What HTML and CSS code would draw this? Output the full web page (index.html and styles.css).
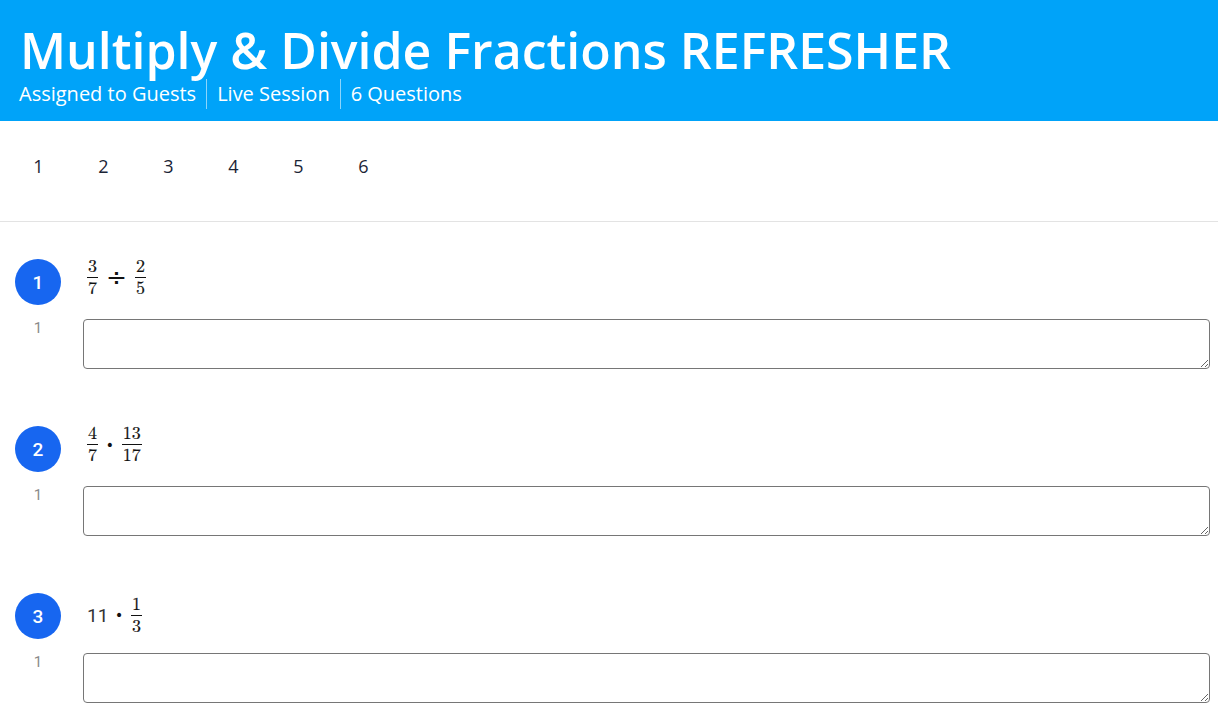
FILE: index.html
```html
<!DOCTYPE html>
<html lang="en">
<head>
<meta charset="utf-8">
<title>Multiply &amp; Divide Fractions REFRESHER</title>
<link rel="stylesheet" href="styles.css">
</head>
<body>
<header class="banner">
  <h1 class="title">Multiply &amp; Divide Fractions REFRESHER</h1>
  <div class="meta">
    <span class="meta-item">Assigned to Guests</span>
    <span class="meta-item">Live Session</span>
    <span class="meta-item">6 Questions</span>
  </div>
</header>
<nav class="qnav">
  <a class="qnav-item">1</a>
  <a class="qnav-item">2</a>
  <a class="qnav-item">3</a>
  <a class="qnav-item">4</a>
  <a class="qnav-item">5</a>
  <a class="qnav-item">6</a>
</nav>
<main class="questions">
  <section class="question">
    <div class="badge">1</div>
    <div class="prompt">
      <span class="frac"><span class="num">3</span><span class="den">7</span></span>
      <span class="op op-div">÷</span>
      <span class="frac"><span class="num">2</span><span class="den">5</span></span>
    </div>
    <div class="points">1</div>
    <textarea class="answer"></textarea>
  </section>
  <section class="question">
    <div class="badge">2</div>
    <div class="prompt">
      <span class="frac"><span class="num">4</span><span class="den">7</span></span>
      <span class="op">·</span>
      <span class="frac"><span class="num">13</span><span class="den">17</span></span>
    </div>
    <div class="points">1</div>
    <textarea class="answer"></textarea>
  </section>
  <section class="question">
    <div class="badge">3</div>
    <div class="prompt prompt-text">
      <span class="plain">11</span>
      <span class="op op-tight">·</span>
      <span class="frac"><span class="num">1</span><span class="den">3</span></span>
    </div>
    <div class="points">1</div>
    <textarea class="answer"></textarea>
  </section>
</main>
</body>
</html>
```
FILE: styles.css
```css
* { box-sizing: border-box; }
html, body { margin: 0; padding: 0; background: #fff; }
body {
  font-family: "Open Sans", "Noto Sans", sans-serif;
  color: #1b2436;
  overflow: hidden;
}
.banner {
  background: #00a3f9;
  color: #fff;
  height: 121px;
  padding: 22px 20px 0 20px;
}
.title {
  margin: 0;
  font-size: 50px;
  font-weight: 600;
  line-height: 56px;
  letter-spacing: 0;
}
.meta {
  display: flex;
  align-items: center;
  margin-top: 1px;
  margin-left: -1px;
}
.meta-item {
  font-size: 20px;
  line-height: 30px;
  padding: 0 10px;
  border-left: 1px solid rgba(255,255,255,0.55);
}
.meta-item:first-child { padding-left: 0; border-left: none; }
.qnav {
  display: flex;
  height: 101px;
  align-items: center;
  border-bottom: 1px solid #e3e3e3;
  padding-left: 6px;
  padding-bottom: 10px;
}
.qnav-item {
  width: 65px;
  text-align: center;
  font-size: 18px;
  color: #1b2436;
  cursor: pointer;
}
.questions { padding: 37px 8px 0 0; }
.question {
  display: grid;
  grid-template-columns: 76px 1fr;
  column-gap: 7px;
  grid-template-rows: 46px auto;
  row-gap: 14px;
  margin-bottom: 57px;
}
.badge {
  width: 46px;
  height: 46px;
  border-radius: 50%;
  background: #1766f0;
  color: #fff;
  font-family: Roboto, "Open Sans", sans-serif;
  font-size: 19px;
  font-weight: 500;
  display: flex;
  align-items: center;
  justify-content: center;
  justify-self: center;
}
.prompt {
  display: flex;
  align-items: center;
  padding-left: 4px;
  margin-top: -9px;
  color: #111;
}
.prompt-text { margin-top: -2px; }
.frac {
  display: inline-flex;
  flex-direction: column;
  align-items: center;
  font-family: "Latin Modern Math", "DejaVu Serif", "Liberation Serif", serif;
  font-size: 18px;
  line-height: 15px;
  -webkit-text-stroke: 0.2px #111;
}
.num { padding: 0 1px 3px; border-bottom: 1px solid #111; }
.den { padding: 3px 1px 0; }
.op {
  font-family: "DejaVu Serif", serif;
  font-size: 22px;
  font-weight: bold;
  margin: 0 8px;
  line-height: 20px;
}
.op-tight { margin: 0 8px 0 7px; }
.op-div {
  font-family: "DejaVu Sans", sans-serif;
  font-weight: normal;
  font-size: 25px;
  margin: 0 8px 0 8px;
}
.plain {
  font-family: Roboto, "Open Sans", sans-serif;
  font-size: 19px;
  color: #333;
  margin-left: 0;
  margin-right: 0;
}
.points {
  text-align: center;
  color: #8a8a8a;
  font-family: Roboto, "Open Sans", sans-serif;
  font-size: 15px;
  line-height: 18px;
}
.answer {
  display: block;
  width: 100%;
  height: 50px;
  border: 1px solid #767676;
  border-radius: 4px;
  font: inherit;
  resize: vertical;
  margin: 0;
}
```
